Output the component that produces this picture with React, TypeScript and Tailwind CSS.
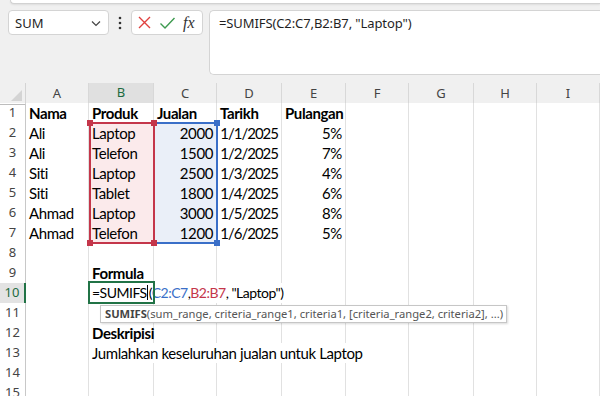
import React from "react";

type Cell = { t?: React.ReactNode; b?: boolean; r?: boolean; nr?: boolean; tight?: boolean; f14?: boolean };

const COLS = ["A", "B", "C", "D", "E", "F", "G", "H", "I"];

const data: Record<number, Record<number, Cell>> = {
  1: { 0: { t: "Nama", b: true }, 1: { t: "Produk", b: true }, 2: { t: "Jualan", b: true }, 3: { t: "Tarikh", b: true }, 4: { t: "Pulangan", b: true } },
  2: { 0: { t: "Ali" }, 1: { t: "Laptop" }, 2: { t: "2000", r: true }, 3: { t: "1/1/2025", r: true, tight: true }, 4: { t: "5%", r: true } },
  3: { 0: { t: "Ali" }, 1: { t: "Telefon" }, 2: { t: "1500", r: true }, 3: { t: "1/2/2025", r: true, tight: true }, 4: { t: "7%", r: true } },
  4: { 0: { t: "Siti" }, 1: { t: "Laptop" }, 2: { t: "2500", r: true }, 3: { t: "1/3/2025", r: true, tight: true }, 4: { t: "4%", r: true } },
  5: { 0: { t: "Siti" }, 1: { t: "Tablet" }, 2: { t: "1800", r: true }, 3: { t: "1/4/2025", r: true, tight: true }, 4: { t: "6%", r: true } },
  6: { 0: { t: "Ahmad" }, 1: { t: "Laptop" }, 2: { t: "3000", r: true }, 3: { t: "1/5/2025", r: true, tight: true }, 4: { t: "8%", r: true } },
  7: { 0: { t: "Ahmad" }, 1: { t: "Telefon" }, 2: { t: "1200", r: true }, 3: { t: "1/6/2025", r: true, tight: true }, 4: { t: "5%", r: true } },
  9: { 1: { t: "Formula", b: true } },
  10: {
    1: {
      t: (
        <>
          =SUMIFS
          <span className="inline-block w-[1px] h-[15px] bg-black align-[-2px] mx-[0.5px]" />
          (<span className="text-[#3a6fc8]">C2:C7</span>,<span className="text-[#c4364a]">B2:B7</span>, "Laptop")
        </>
      ),
      nr: true,
      f14: true,
    },
    2: { nr: true },
    3: { nr: true },
  },
  12: { 1: { t: "Deskripisi", b: true } },
  13: {
    1: { t: "Jumlahkan keseluruhan jualan untuk Laptop", nr: true },
    2: { nr: true },
    3: { nr: true },
    4: { nr: true },
  },
};

const GRID = "grid grid-cols-[26px_63px_65px_63px_65px_64px_63px_65px_63px_1fr]";
const cellFont = { fontFamily: "Lato, 'Liberation Sans', sans-serif" };

function Row({ n }: { n: number }) {
  const row = data[n] || {};
  const active = n === 10;
  return (
    <div className={`${GRID} h-[20px]`}>
      <div
        className={`flex items-center justify-center text-[13px] border-b border-[#e1e1e1] ${
          active ? "bg-[#e3e3e3] text-[#1d6b40] border-r-2 border-r-[#217346]" : "bg-white text-[#444] border-r border-r-[#c8c8c8]"
        }`}
      >
        {n}
      </div>
      {COLS.map((_, i) => {
        const c = row[i] || {};
        let bg = "bg-white";
        if (n >= 2 && n <= 7 && i === 1) bg = "bg-[#fbeaeb]";
        if (n >= 2 && n <= 7 && i === 2) bg = "bg-[#eaeff8]";
        const size = c.f14 ? "text-[14px] tracking-[-0.5px]" : c.tight ? "text-[15px] tracking-[-1px]" : "text-[15px] tracking-[-0.4px]";
        return (
          <div
            key={i}
            className={`relative flex items-end pb-[1px] border-b border-[#e1e1e1] ${c.nr ? "" : "border-r border-r-[#e1e1e1]"} ${bg} ${
              c.r ? "justify-end pr-[3px]" : "pl-[3px]"
            }`}
          >
            {c.t !== undefined && (
              <span
                className={`whitespace-nowrap leading-[18px] text-black relative z-10 ${size} ${c.b ? "font-bold" : ""}`}
                style={cellFont}
              >
                {c.t}
              </span>
            )}
          </div>
        );
      })}
    </div>
  );
}

function Handle({ x, y, color }: { x: number; y: number; color: string }) {
  return <div className="absolute w-[6px] h-[6px] z-30" style={{ left: x - 3, top: y - 3, background: color }} />;
}

export default function App() {
  const rows = Array.from({ length: 15 }, (_, i) => i + 1);
  const red = "#c4364a";
  const blue = "#3a6fc8";
  return (
    <div className="w-[600px] h-[396px] overflow-hidden bg-[#f0f0f0] relative" style={{ fontFamily: "'Noto Sans', 'Open Sans', sans-serif" }}>
      {/* ribbon edge */}
      <div className="ml-[10px] h-[4px] bg-white border-b border-l border-[#d2d2d2] rounded-bl-[6px] shadow-[0_1px_2px_rgba(0,0,0,0.08)]" />

      {/* formula bar */}
      <div className="flex items-start mt-[6px] h-[65px] pl-[8px]">
        <div className="w-[101px] h-[25px] bg-white border border-[#d4d4d4] rounded-[4px] flex items-center justify-between pl-[6px] pr-[6px]">
          <span className="text-[13px] leading-[18px] text-[#1f1f1f] mt-[1px]">SUM</span>
          <svg width="12" height="12" viewBox="0 0 12 12">
            <path d="M2 4.5 L6 8.5 L10 4.5" fill="none" stroke="#444" strokeWidth="1.2" />
          </svg>
        </div>
        <div className="w-[22px] h-[25px] flex items-center justify-center">
          <svg width="4" height="14" viewBox="0 0 4 14">
            <circle cx="2" cy="2" r="1.3" fill="#333" />
            <circle cx="2" cy="7" r="1.3" fill="#333" />
            <circle cx="2" cy="12" r="1.3" fill="#333" />
          </svg>
        </div>
        <div className="w-[72px] h-[25px] bg-white border border-[#d4d4d4] rounded-[4px] flex items-center pl-[5px] gap-[7px]">
          <svg width="15" height="15" viewBox="0 0 15 15">
            <path d="M2 2 L13 13 M13 2 L2 13" stroke="#e0413f" strokeWidth="1.4" fill="none" />
          </svg>
          <svg width="17" height="14" viewBox="0 0 17 14">
            <path d="M1.5 7.5 L6 12 L15.5 2" stroke="#3d9a4f" strokeWidth="1.4" fill="none" />
          </svg>
          <span className="text-[16px] italic text-[#333] leading-none" style={{ fontFamily: "'Liberation Serif', serif" }}>
            fx
          </span>
        </div>
        <div className="ml-[6px] flex-1 h-[65px] bg-white border border-r-0 border-[#d4d4d4] rounded-l-[5px] pl-[9px] pt-[3px] text-[13px] leading-[18px]">
          <span className="text-[#1f1f1f] tracking-[-0.1px]">=SUMIFS(C2:C7,B2:B7, "Laptop")</span>
        </div>
      </div>

      {/* grid */}
      <div className="mt-[8px] relative">
        <div className={`${GRID} h-[20px] bg-[#f0f0f0]`}>
          <div className="relative border-r border-[#d4d4d4] border-b border-b-[#bdbdbd]">
            <svg className="absolute right-[3px] bottom-[3px]" width="11" height="11" viewBox="0 0 11 11">
              <path d="M11 0 L11 11 L0 11 Z" fill="#d4d4d4" />
            </svg>
          </div>
          {COLS.map((c, i) => (
            <div
              key={c}
              className={`flex items-center justify-center text-[13px] border-r border-[#d8d8d8] ${
                i === 1 ? "bg-[#e0e0e0] text-[#1d6b40] border-b-2 border-b-[#217346]" : "text-[#444] border-b border-b-[#bdbdbd]"
              }`}
            >
              {c}
            </div>
          ))}
        </div>
        {rows.map((n) => (
          <Row key={n} n={n} />
        ))}

        {/* range highlights */}
        <div className="absolute z-20 border-2" style={{ left: 153, top: 39, width: 65, height: 122, borderColor: blue }} />
        <div className="absolute z-20 border-2" style={{ left: 89, top: 39, width: 66, height: 122, borderColor: red }} />
        <Handle x={90} y={40} color={red} />
        <Handle x={154} y={40} color={red} />
        <Handle x={90} y={160} color={red} />
        <Handle x={154} y={160} color={red} />
        <Handle x={217} y={40} color={blue} />
        <Handle x={217} y={160} color={blue} />

        {/* active cell */}
        <div className="absolute z-20 border-2 border-[#217346]" style={{ left: 88, top: 198, width: 67, height: 23 }} />

        {/* tooltip */}
        <div
          className="absolute z-30 bg-white border border-[#c6c6c6] shadow-[1px_1px_2px_rgba(0,0,0,0.15)] flex items-center pl-[4px] h-[18px] text-[11.2px] text-[#555] whitespace-nowrap"
          style={{ left: 100, top: 222, width: 407 }}
        >
          <span className="font-bold text-[#444]">SUMIFS</span>
          <span>(sum_range, criteria_range1, criteria1, [criteria_range2, criteria2], ...)</span>
        </div>
      </div>
    </div>
  );
}
